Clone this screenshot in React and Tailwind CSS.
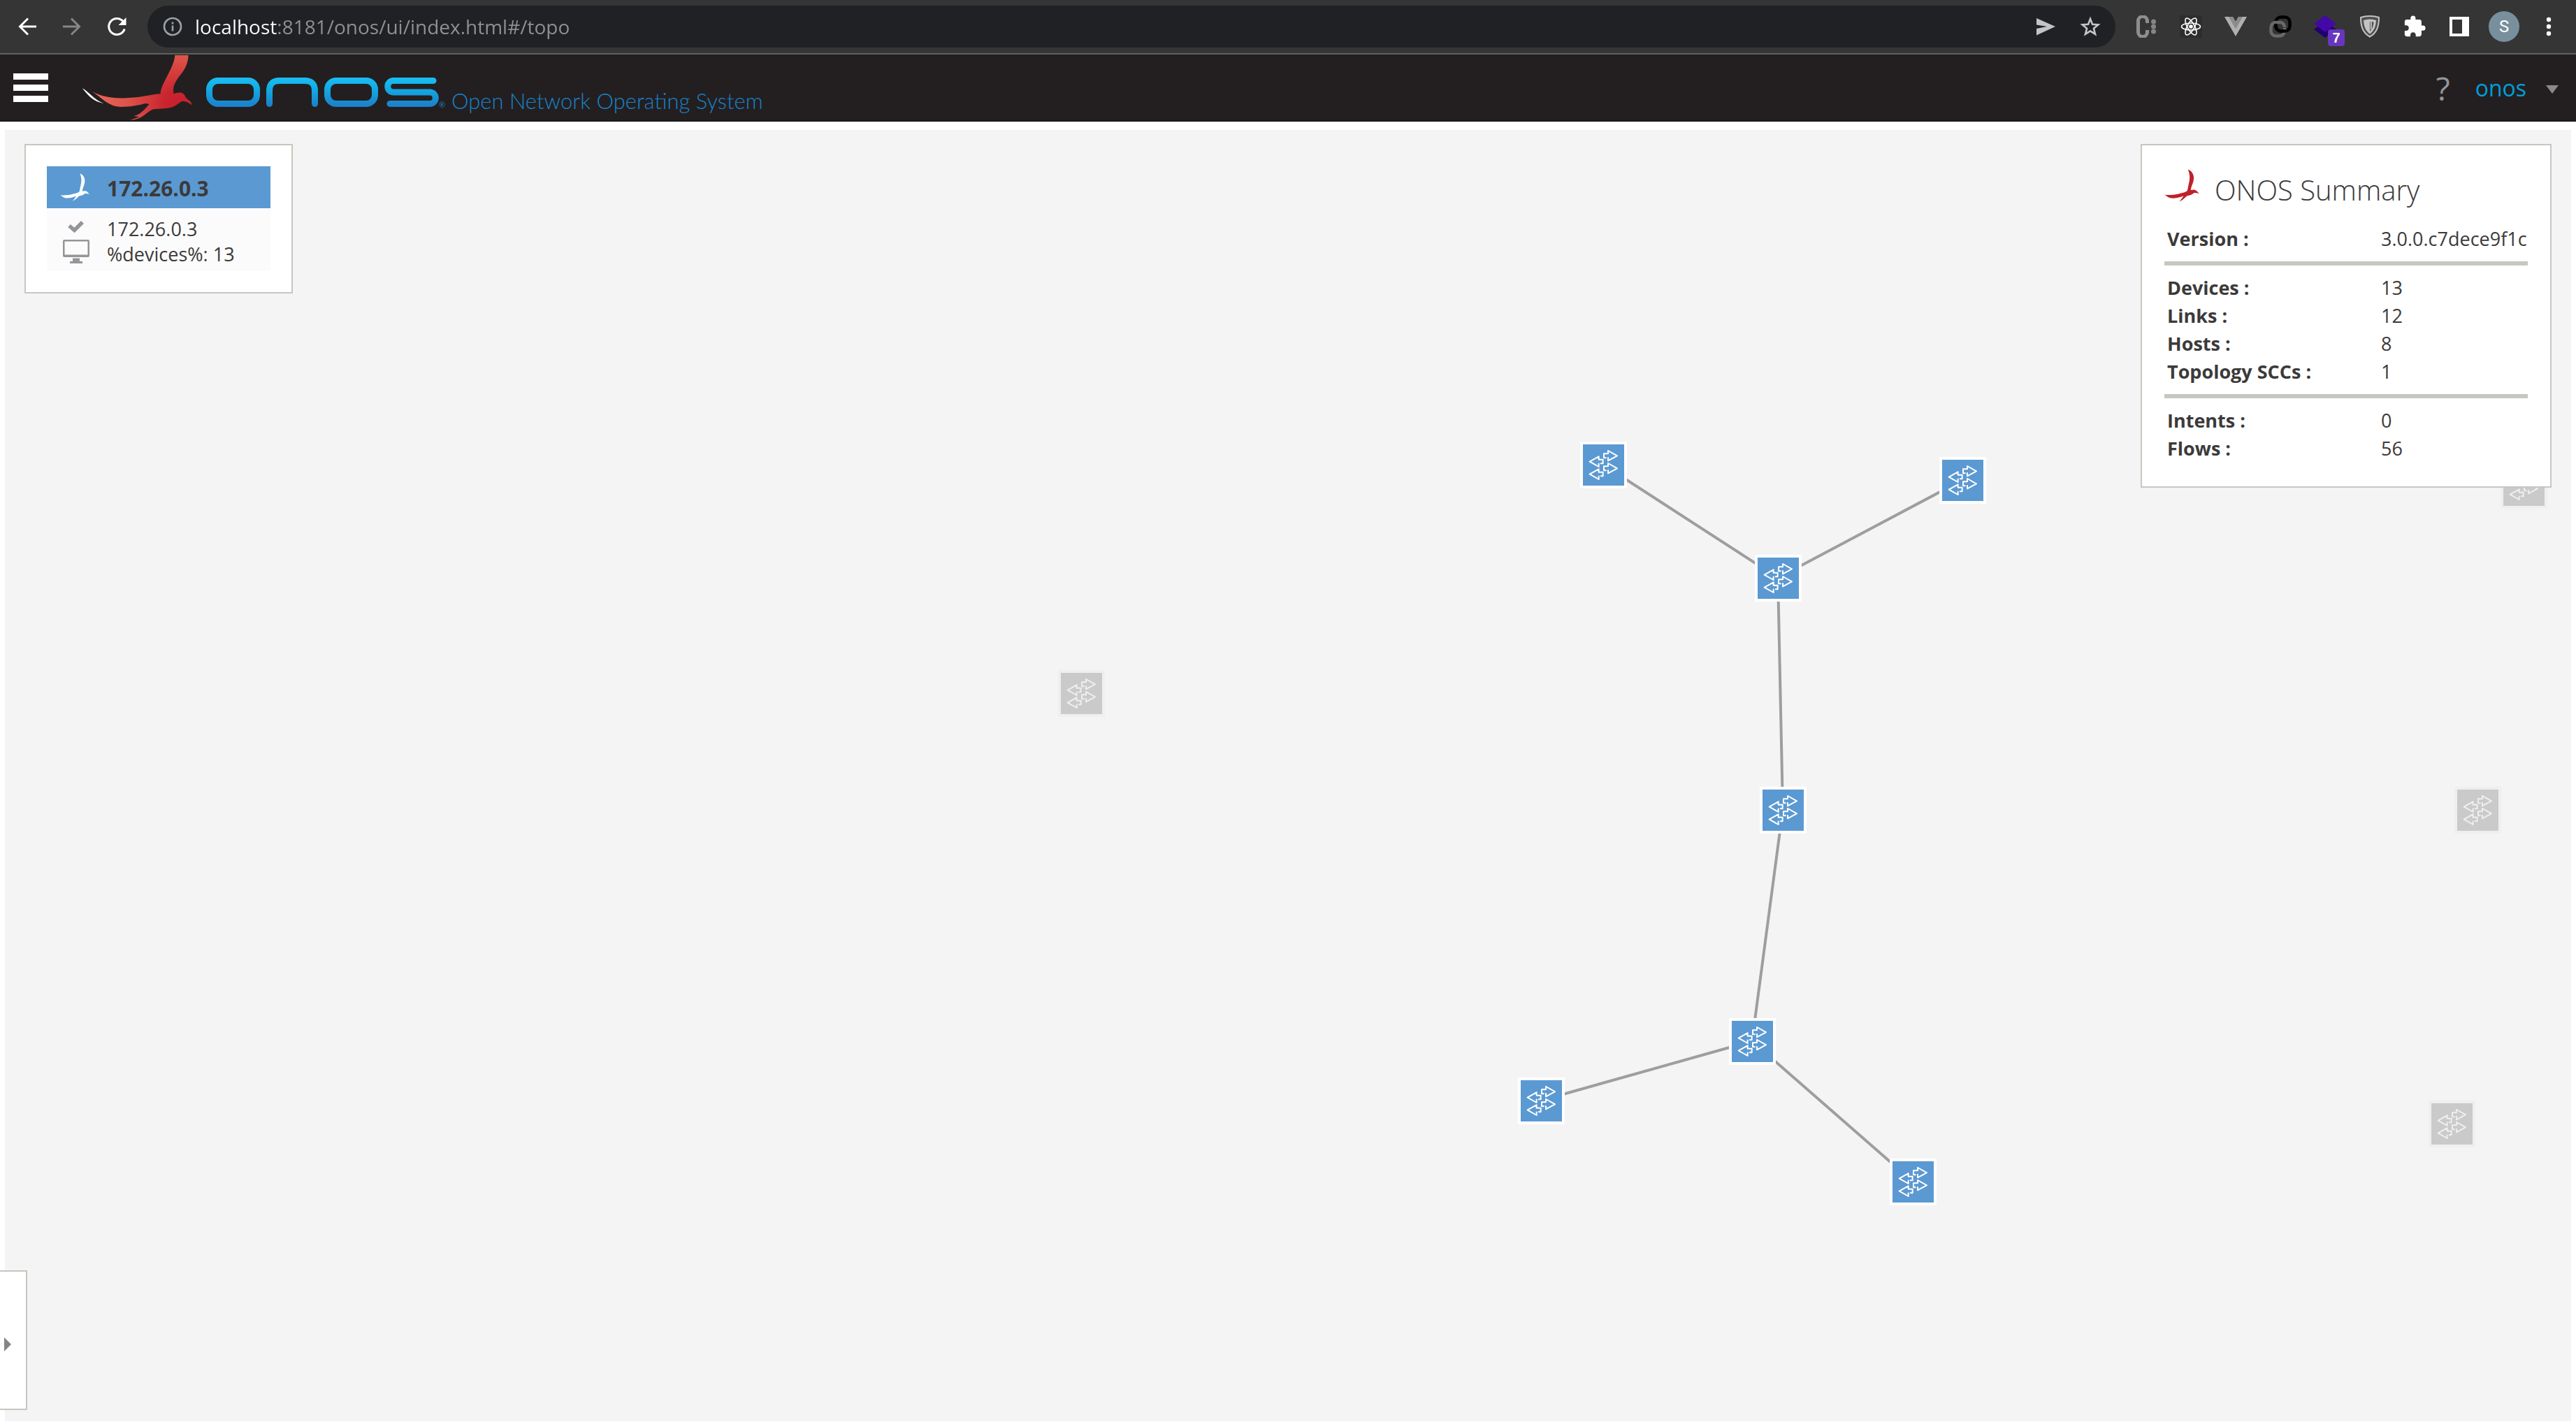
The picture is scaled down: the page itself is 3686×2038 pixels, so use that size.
import React from "react";

const BIRD =
  "M344 205C358 210 368 225 364 245C362 258 355 268 354 280C358 282 362 278 368 280C376 283 380 288 384 294C376 291 370 290 364 292C358 298 350 300 342 301C334 306 328 316 312 323C318 316 322 310 328 302C310 308 290 314 275 308C267 305 264 300 258 298C275 300 300 298 318 292C328 289 338 288 342 281C344 265 350 250 350 235C350 222 347 214 344 205Z";

function Bird({ className }) {
  return (
    <svg viewBox="258 204 127 120" className={className} fill="currentColor" preserveAspectRatio="none" aria-hidden="true">
      <path d={BIRD} />
    </svg>
  );
}

function IconButton({ label, children }) {
  return (
    <button type="button" aria-label={label} className="relative flex h-[60px] w-16 shrink-0 items-center justify-center">
      {children}
    </button>
  );
}

function BrowserBar() {
  return (
    <div className="flex items-center gap-3 border-b-2 border-[#5f6061] bg-[#353535] px-[7px] py-2">
      <div className="flex">
        <IconButton label="Back">
          <svg className="size-8" viewBox="0 0 32 32" fill="none" stroke="#fff" strokeWidth="3">
            <path d="M29 16H6M17 4.500L5.500 16L17 27.500" />
          </svg>
        </IconButton>
        <IconButton label="Forward">
          <svg className="size-8" viewBox="0 0 32 32" fill="none" stroke="#868686" strokeWidth="3">
            <path d="M3 16H26M15 4.500L26.500 16L15 27.500" />
          </svg>
        </IconButton>
        <IconButton label="Reload">
          <svg className="size-8" viewBox="0 0 32 32" fill="none">
            <path d="M25 8.500A11.500 11.500 0 1 0 27.200 19.500" stroke="#fff" strokeWidth="3" />
            <path d="M29.500 3V14H18.500Z" fill="#fff" />
          </svg>
        </IconButton>
      </div>
      <div className="flex h-[60px] flex-1 items-center rounded-full bg-[#202124] pr-1 pl-[22px]">
        <svg className="size-7 shrink-0" viewBox="0 0 28 28" fill="none" stroke="#9aa0a6" strokeWidth="2.700" aria-hidden="true">
          <circle cx="14" cy="14" r="12" />
          <path d="M14 12.500V20.500M14 7.500V10.500" />
        </svg>
        <input
          aria-label="Address"
          defaultValue="localhost:8181/onos/ui/index.html#/topo"
          className="ml-[18px] h-10 flex-1 bg-[linear-gradient(90deg,#fff_118px,#909194_118px)] bg-clip-text font-['Open_Sans',sans-serif] text-[28px] text-transparent outline-none"
        />
        <IconButton label="Share">
          <svg className="size-8" viewBox="0 0 32 32" fill="#c3c4c6">
            <path d="M3 4L30 16L3 28.500V19L18 16L3 13.500Z" />
          </svg>
        </IconButton>
        <IconButton label="Bookmark">
          <svg className="size-8" viewBox="0 0 32 32" fill="none" stroke="#c3c4c6" strokeWidth="2.600">
            <path d="M16 5L19 12.800L27.300 13.400L20.900 18.700L23 26.800L16 22.300L9 26.800L11.100 18.700L4.700 13.400L13 12.800Z" />
          </svg>
        </IconButton>
      </div>
      <div className="flex">
        <IconButton label="Console extension">
          <svg className="size-8" viewBox="0 0 32 32" fill="none">
            <path d="M17.500 11V8A5.500 5.500 0 0 0 4.500 8V24A5.500 5.500 0 0 0 17.500 24V21" stroke="#8e8e8e" strokeWidth="5" />
            <circle cx="26.500" cy="9" r="3.500" fill="#858585" />
            <circle cx="26.500" cy="16" r="3.500" fill="#858585" />
            <circle cx="26.500" cy="23" r="3.500" fill="#858585" />
          </svg>
        </IconButton>
        <IconButton label="React tools">
          <svg className="size-8 bg-[#2d2d2d]" viewBox="0 0 32 32" fill="none" stroke="#fff" strokeWidth="1.600">
            <circle cx="16" cy="16" r="2.800" fill="#fff" stroke="none" />
            <ellipse cx="16" cy="16" rx="13.500" ry="5" />
            <ellipse cx="16" cy="16" rx="13.500" ry="5" transform="rotate(60 16 16)" />
            <ellipse cx="16" cy="16" rx="13.500" ry="5" transform="rotate(120 16 16)" />
          </svg>
        </IconButton>
        <IconButton label="Vue tools">
          <svg className="size-8" viewBox="0 0 32 32">
            <path d="M0 2H12L16 9L20 2H32L16 30Z" fill="#b0b0b0" />
            <path d="M6 2H12L16 9L20 2H26L16 19.500Z" fill="#8b8b8b" />
          </svg>
        </IconButton>
        <IconButton label="Link extension">
          <svg className="size-8" viewBox="0 0 32 32" fill="none" strokeWidth="4.500">
            <rect x="9.500" y="2.500" width="20" height="20" rx="7" stroke="#000" />
            <path d="M17 10H9.500A7 7 0 0 0 2.500 17V22.500A7 7 0 0 0 9.500 29.500H15A7 7 0 0 0 22 22.500V18" stroke="#68696c" />
            <path d="M15 9.800A7 7 0 0 1 22 17" stroke="#68696c" />
            <path d="M9.500 12V16A7 7 0 0 0 16 22.500H24" stroke="#000" />
          </svg>
        </IconButton>
        <IconButton label="Layers extension, 7 items">
          <svg className="size-8" viewBox="0 0 32 32">
            <path d="M0 20L16 9L32 20L16 32Z" fill="#1f0070" />
            <path d="M16 0L32 12L16 24L0 12Z" fill="#4407a8" />
          </svg>
          <span className="absolute top-[34px] left-9 flex h-6 w-6 items-center justify-center rounded bg-[#6836bd] font-['Liberation_Sans',sans-serif] text-xl leading-6 font-bold text-white">
            7
          </span>
        </IconButton>
        <IconButton label="Shield extension">
          <svg className="size-8" viewBox="0 0 32 32">
            <path d="M16 1C21 1 25 1.500 29 3C29 16 26 25 16 30.500C6 25 3 16 3 3C7 1.500 11 1 16 1Z" fill="#505050" stroke="#c4c4c4" strokeWidth="2" />
            <path d="M16 5.500C19 5.500 22 6 25 7C24.500 16 22 22 16 26.500C10 22 7.500 16 7 7C10 6 13 5.500 16 5.500Z" fill="#c4c4c4" />
            <path d="M16 9C18 9 20 9 21.500 9.800C21 16 19.500 20 16 23Z" fill="#505050" />
            <path d="M17 9H18.500V19L17 21Z" fill="#e4e4e4" />
          </svg>
        </IconButton>
        <IconButton label="Extensions">
          <svg className="size-[34px]" viewBox="0 0 24 24" fill="#fff">
            <path d="M20.500 11H19V7c0-1.100-.9-2-2-2h-4V3.500a2.500 2.500 0 0 0-5 0V5H4c-1.100 0-1.990.9-1.990 2v3.800H3.500c1.490 0 2.700 1.210 2.700 2.700s-1.210 2.700-2.700 2.700H2V20c0 1.100.9 2 2 2h3.800v-1.500c0-1.490 1.210-2.700 2.700-2.700 1.490 0 2.700 1.210 2.700 2.700V22H17c1.100 0 2-.9 2-2v-4h1.500a2.500 2.500 0 0 0 0-5z" />
          </svg>
        </IconButton>
        <IconButton label="Side panel">
          <svg className="size-7" viewBox="0 0 28 28" fill="#fff" fillRule="evenodd">
            <path d="M0 0H28V28H0ZM4 4V24H18V4Z" />
          </svg>
        </IconButton>
        <IconButton label="Profile">
          <span className="flex size-11 items-center justify-center rounded-full bg-[#78909c] font-['Roboto',sans-serif] text-2xl text-white">
            S
          </span>
        </IconButton>
        <IconButton label="Menu">
          <svg className="size-8" viewBox="0 0 32 32" fill="#fff">
            <circle cx="16" cy="6" r="3.200" />
            <circle cx="16" cy="16" r="3.200" />
            <circle cx="16" cy="26" r="3.200" />
          </svg>
        </IconButton>
      </div>
    </div>
  );
}

function OnosLogo() {
  return (
    <svg viewBox="116 80 512 94" className="h-[94px] w-[512px] shrink-0" role="img" aria-label="ONOS">
      <defs>
        <radialGradient id="birdRed" gradientUnits="userSpaceOnUse" cx="430" cy="235" r="340">
          <stop offset="0" stopColor="#c7202e" />
          <stop offset="0.150" stopColor="#c9242f" />
          <stop offset="0.550" stopColor="#dc5047" />
          <stop offset="1" stopColor="#ec695b" />
        </radialGradient>
        <linearGradient id="wordBlue" gradientUnits="userSpaceOnUse" x1="0" y1="112" x2="0" y2="154">
          <stop offset="0" stopColor="#1cbdf2" />
          <stop offset="0.300" stopColor="#12b0e8" />
          <stop offset="1" stopColor="#1b7fc8" />
        </linearGradient>
      </defs>
      <g transform="translate(100 70) scale(0.357 0.3333)">
        <path
          fill="url(#birdRed)"
          d="M421 30L475 30C474 60 465 85 448 108C420 145 411 165 416 196C432 190 447 188 455 196C463 203 462 213 474 221C483 227 488 234 489 244C478 234 466 228 452 227C438 230 430 248 405 255C380 260 350 259 330 263C305 277 290 305 242 309C258 303 272 297 278 294L256 292C285 283 300 262 318 240L304 237C280 243 245 252 205 252C155 250 130 215 89 185C135 215 200 218 265 211C300 207 335 197 363 196C364 170 376 150 390 120C405 88 419 60 421 30Z"
        />
        <path fill="#fff" d="M50 172C75 186 100 225 136 237C96 230 74 206 50 172Z" />
      </g>
      <g fill="none" stroke="url(#wordBlue)" strokeWidth="9" strokeLinecap="round">
        <rect x="299.500" y="116.500" width="68" height="33" rx="12.500" />
        <path d="M385.500 149.500V131Q385.500 116.500 400 116.500H436Q450.500 116.500 450.500 131V149.500" />
        <rect x="468.500" y="116.500" width="68" height="33" rx="12.500" />
        <path d="M620 116.500H563A8.200 8.200 0 0 0 563 133H615A8.200 8.200 0 0 1 615 149.500H558" />
      </g>
    </svg>
  );
}

function Masthead() {
  return (
    <header className="flex h-24 items-center border-b border-black bg-[#231f20] font-['Open_Sans',sans-serif]">
      <button type="button" aria-label="Toggle navigation" className="ml-[19px] flex w-[50px] flex-col gap-[7px]">
        <span className="h-[9px] bg-white" />
        <span className="h-[9px] bg-white" />
        <span className="h-[9px] bg-white" />
      </button>
      <a href="#/topo" className="ml-[47px] flex items-center">
        <OnosLogo />
        <span className="mt-12 w-[18px] font-['Lato',sans-serif] text-[11px] leading-4 text-[#1b7fc8]">®</span>
        <span className="mt-9 font-['Lato',sans-serif] text-[31px] leading-10 font-light text-[#1883cb]">
          Open Network Operating System
        </span>
      </a>
      <nav className="ml-auto flex items-center pr-[25px]">
        <a href="#/help" aria-label="Help" className="text-[46px] leading-none text-[#939598]">
          ?
        </a>
        <button type="button" className="ml-9 flex items-center gap-7 text-[32px] leading-10 text-[#009fdb]">
          onos
          <svg className="mt-1 h-3 w-[18px]" viewBox="0 0 18 12" fill="#8a8a8a" aria-hidden="true">
            <path d="M0 0H18L9 12Z" />
          </svg>
        </button>
      </nav>
    </header>
  );
}

const NODES = [
  { id: "s1", x: 2254, y: 446, online: true },
  { id: "s2", x: 2768, y: 468, online: true },
  { id: "s3", x: 2504, y: 608, online: true },
  { id: "s4", x: 2511, y: 940, online: true },
  { id: "s5", x: 2467, y: 1271, online: true },
  { id: "s6", x: 2165, y: 1356, online: true },
  { id: "s7", x: 2697, y: 1472, online: true },
  { id: "s8", x: 1507, y: 773, online: false },
  { id: "s9", x: 3505, y: 940, online: false },
  { id: "s10", x: 3468, y: 1389, online: false },
  { id: "s11", x: 3571, y: 475, online: false },
];

const LINKS = [
  ["s1", "s3"],
  ["s2", "s3"],
  ["s3", "s4"],
  ["s4", "s5"],
  ["s5", "s6"],
  ["s5", "s7"],
];

const HALF = 33;
const nodeById = Object.fromEntries(NODES.map((n) => [n.id, n]));

function SwitchNode({ node }) {
  return (
    <button
      type="button"
      aria-label={"Switch " + node.id}
      className={
        node.online
          ? "absolute size-[67px] border-4 border-white bg-[#5b99d2] text-white"
          : "absolute size-[67px] border-4 border-[#efefef] bg-[#cacaca] text-[#efefef]"
      }
      style={{ left: node.x, top: node.y }}
    >
      <svg viewBox="105 78 177 177" className="size-full" fill="none" stroke="currentColor" strokeWidth="6" strokeLinejoin="round" aria-hidden="true">
        <path d="M206 136H195V118H213V105L252 127L213 148V133" />
        <path d="M180 160H191V143H173V130L134 152L173 174V158" />
        <path d="M206 190H195V172H213V159L252 181L213 202V187" />
        <path d="M180 214H191V197H173V184L134 206L173 228V212" />
      </svg>
    </button>
  );
}

function ClusterPanel() {
  return (
    <section className="absolute top-5 left-7 w-96 border-2 border-[#c7c7c0] bg-white p-[30px] text-[#3c3a3a]">
      <h2 className="flex h-[60px] items-center bg-[#5b99d2] pl-[19px] text-3xl font-bold">
        <Bird className="h-10 w-[42px] text-white" />
        <span className="mt-1 ml-[25px]">172.26.0.3</span>
      </h2>
      <ul className="bg-[#fbfbfb] pt-3 pb-[6px] text-[27px] leading-9">
        <li className="flex">
          <span className="flex w-[86px] justify-center pt-[6px] pr-2">
            <svg className="ml-1 h-[17px] w-[23px]" viewBox="0 0 23 17" fill="none" stroke="#939598" strokeWidth="5.500" aria-hidden="true">
              <path d="M2 7L9.500 13.500L21 2" />
            </svg>
          </span>
          172.26.0.3
        </li>
        <li className="flex">
          <span className="w-[86px] pl-[23px]">
            <svg className="-mt-[3px] h-[34px] w-[38px]" viewBox="0 0 38 34" fill="#939598" aria-hidden="true">
              <path fillRule="evenodd" d="M2 0H36Q38 0 38 2V23Q38 25 36 25H2Q0 25 0 23V2Q0 0 2 0ZM2.500 2.500V21.500H35.500V2.500Z" />
              <path d="M14 26.500H24V31H28V34H10V31H14Z" />
            </svg>
          </span>
          %devices%: 13
        </li>
      </ul>
    </section>
  );
}

const SUMMARY = [
  [["Version", "3.0.0.c7dece9f1c"]],
  [
    ["Devices", "13"],
    ["Links", "12"],
    ["Hosts", "8"],
    ["Topology SCCs", "1"],
  ],
  [
    ["Intents", "0"],
    ["Flows", "56"],
  ],
];

function SummaryPanel() {
  return (
    <section className="absolute top-5 right-7 w-[588px] border-2 border-[#c7c7c0] bg-white px-8 py-[34px] text-[#3c3a3a]">
      <h2 className="flex h-[54px] items-start text-[40px] leading-[60px] font-light">
        <Bird className="h-[47px] w-[50px] text-[#c0202a]" />
        <span className="ml-[22px]">ONOS Summary</span>
      </h2>
      <table className="mt-[26px] w-full border-collapse text-left text-[27px] leading-10">
        {SUMMARY.map((group, i) => (
          <tbody key={i}>
            {i > 0 && (
              <tr>
                <td colSpan={2} className="h-[30px] p-0 align-middle">
                  <hr className="h-[6px] border-0 bg-[#c7c7c0]" />
                </td>
              </tr>
            )}
            {group.map(([label, value]) => (
              <tr key={label}>
                <th scope="row" className="w-[310px] py-0 pl-1 font-bold">
                  {label} :
                </th>
                <td className="p-0">{value}</td>
              </tr>
            ))}
          </tbody>
        ))}
      </table>
    </section>
  );
}

function TopologyMap() {
  return (
    <main className="flex flex-1 flex-col bg-white px-[7px] pt-3 pb-1 font-['Open_Sans',sans-serif]">
      <div className="relative flex-1 bg-[#f4f4f4]">
        <svg className="absolute inset-0 size-full" stroke="#9e9ea0" strokeWidth="4" aria-hidden="true">
          {LINKS.map(([a, b]) => (
            <line
              key={a + b}
              x1={nodeById[a].x + HALF}
              y1={nodeById[a].y + HALF}
              x2={nodeById[b].x + HALF}
              y2={nodeById[b].y + HALF}
            />
          ))}
        </svg>
        {NODES.map((n) => (
          <SwitchNode key={n.id} node={n} />
        ))}
        <ClusterPanel />
        <SummaryPanel />
        <button
          type="button"
          aria-label="Show toolbar"
          className="absolute bottom-4 -left-[7px] flex h-[200px] w-[39px] items-center border-2 border-l-0 border-[#c7c7c0] bg-white pt-3 pl-[6px]"
        >
          <svg className="h-5 w-[10px]" viewBox="0 0 10 20" fill="#858585" aria-hidden="true">
            <path d="M0 0L10 10L0 20Z" />
          </svg>
        </button>
      </div>
    </main>
  );
}

export default function App() {
  return (
    <div className="flex min-h-screen flex-col">
      <BrowserBar />
      <Masthead />
      <TopologyMap />
    </div>
  );
}
